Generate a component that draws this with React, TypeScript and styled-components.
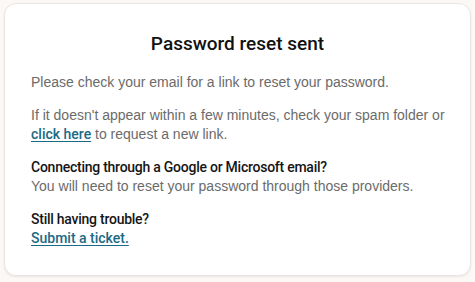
import * as React from 'react'
import styled, { createGlobalStyle } from 'styled-components'

const Global = createGlobalStyle`
  html, body {
    margin: 0;
    padding: 0;
    background: #fcf8f6;
  }
  body {
    font-family: "Liberation Sans", Arial, sans-serif;
  }
`

const Page = styled.div`
  width: 475px;
  height: 282px;
  box-sizing: border-box;
  padding: 3px 4px 6px 4px;
`

const Card = styled.div`
  box-sizing: border-box;
  height: 273px;
  background: #fff;
  border: 1px solid #ebe6e3;
  border-radius: 12px;
  box-shadow: 0 1px 2px rgba(0, 0, 0, 0.08);
  padding: 28px 20px 0 26px;
`

const Title = styled.h1`
  margin: 0 6px 17px 0;
  text-align: center;
  font-family: Roboto, "Liberation Sans", Arial, sans-serif;
  font-size: 19px;
  font-weight: 500;
  line-height: 24px;
  color: #111;
`

const Para = styled.p`
  margin: 0 0 14px 0;
  font-size: 14px;
  line-height: 19px;
  color: #6b6b6b;
`

const Heading = styled.span`
  display: block;
  font-family: Roboto, "Liberation Sans", Arial, sans-serif;
  font-weight: 500;
  letter-spacing: -0.25px;
  color: #151515;
`

const Link = styled.a`
  font-family: Roboto, "Liberation Sans", Arial, sans-serif;
  color: #1b6a85;
  font-weight: 500;
  text-decoration: underline;
  text-underline-offset: 2px;
`

const App: React.FC = () => {
  return (
    <Page>
      <Global />
      <Card>
        <Title>Password reset sent</Title>
        <Para>Please check your email for a link to reset your password.</Para>
        <Para>
          If it doesn't appear within a few minutes, check your spam folder or{' '}
          <Link href="#">click here</Link> to request a new link.
        </Para>
        <Para>
          <Heading>Connecting through a Google or Microsoft email?</Heading>
          You will need to reset your password through those providers.
        </Para>
        <Para>
          <Heading>Still having trouble?</Heading>
          <Link href="#">Submit a ticket.</Link>
        </Para>
      </Card>
    </Page>
  )
}

export default App
